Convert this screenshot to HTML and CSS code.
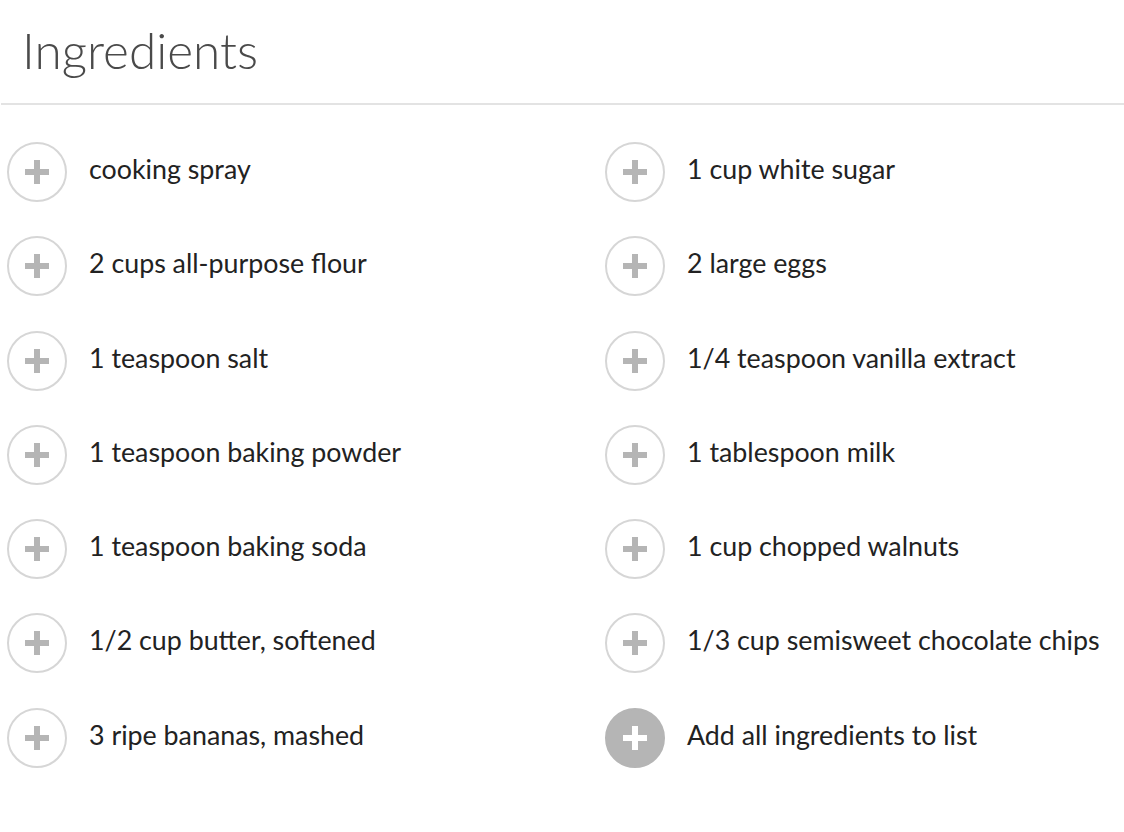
FILE: index.html
```html
<!DOCTYPE html>
<html>
<head>
<meta charset="utf-8">
<link rel="stylesheet" href="styles.css">
</head>
<body>
<div class="page">
  <h1 class="title">Ingredients</h1>
  <div class="rule"></div>
  <div class="grid">
    <div class="col">
      <div class="item"><span class="btn"><svg viewBox="0 0 24 24"><rect x="9" y="0" width="6" height="24"/><rect x="0" y="9" width="24" height="6"/></svg></span><span class="label">cooking spray</span></div>
      <div class="item"><span class="btn"><svg viewBox="0 0 24 24"><rect x="9" y="0" width="6" height="24"/><rect x="0" y="9" width="24" height="6"/></svg></span><span class="label">2 cups all-purpose flour</span></div>
      <div class="item"><span class="btn"><svg viewBox="0 0 24 24"><rect x="9" y="0" width="6" height="24"/><rect x="0" y="9" width="24" height="6"/></svg></span><span class="label">1 teaspoon salt</span></div>
      <div class="item"><span class="btn"><svg viewBox="0 0 24 24"><rect x="9" y="0" width="6" height="24"/><rect x="0" y="9" width="24" height="6"/></svg></span><span class="label">1 teaspoon baking powder</span></div>
      <div class="item"><span class="btn"><svg viewBox="0 0 24 24"><rect x="9" y="0" width="6" height="24"/><rect x="0" y="9" width="24" height="6"/></svg></span><span class="label">1 teaspoon baking soda</span></div>
      <div class="item"><span class="btn"><svg viewBox="0 0 24 24"><rect x="9" y="0" width="6" height="24"/><rect x="0" y="9" width="24" height="6"/></svg></span><span class="label">1/2 cup butter, softened</span></div>
      <div class="item"><span class="btn"><svg viewBox="0 0 24 24"><rect x="9" y="0" width="6" height="24"/><rect x="0" y="9" width="24" height="6"/></svg></span><span class="label">3 ripe bananas, mashed</span></div>
    </div>
    <div class="col">
      <div class="item"><span class="btn"><svg viewBox="0 0 24 24"><rect x="9" y="0" width="6" height="24"/><rect x="0" y="9" width="24" height="6"/></svg></span><span class="label">1 cup white sugar</span></div>
      <div class="item"><span class="btn"><svg viewBox="0 0 24 24"><rect x="9" y="0" width="6" height="24"/><rect x="0" y="9" width="24" height="6"/></svg></span><span class="label">2 large eggs</span></div>
      <div class="item"><span class="btn"><svg viewBox="0 0 24 24"><rect x="9" y="0" width="6" height="24"/><rect x="0" y="9" width="24" height="6"/></svg></span><span class="label">1/4 teaspoon vanilla extract</span></div>
      <div class="item"><span class="btn"><svg viewBox="0 0 24 24"><rect x="9" y="0" width="6" height="24"/><rect x="0" y="9" width="24" height="6"/></svg></span><span class="label">1 tablespoon milk</span></div>
      <div class="item"><span class="btn"><svg viewBox="0 0 24 24"><rect x="9" y="0" width="6" height="24"/><rect x="0" y="9" width="24" height="6"/></svg></span><span class="label">1 cup chopped walnuts</span></div>
      <div class="item"><span class="btn"><svg viewBox="0 0 24 24"><rect x="9" y="0" width="6" height="24"/><rect x="0" y="9" width="24" height="6"/></svg></span><span class="label">1/3 cup semisweet chocolate chips</span></div>
      <div class="item"><span class="btn btn-all"><svg viewBox="0 0 24 24"><rect x="9" y="0" width="6" height="24"/><rect x="0" y="9" width="24" height="6"/></svg></span><span class="label">Add all ingredients to list</span></div>
    </div>
  </div>
</div>
</body>
</html>
```

FILE: styles.css
```css
html, body {
  margin: 0;
  padding: 0;
  background: #fff;
}
.page {
  font-family: "Lato", "Open Sans", sans-serif;
  color: #222;
  width: 1124px;
  height: 832px;
  overflow: hidden;
}
.title {
  margin: 0;
  padding: 20px 0 0 22px;
  height: 82px;
  box-sizing: border-box;
  font-size: 49.5px;
  font-weight: 300;
  color: #4a4a4a;
  line-height: 60px;
}
.rule {
  margin: 21px 0 0 1px;
  height: 2px;
  background: #e3e3e3;
}
.grid {
  display: grid;
  grid-template-columns: 598px 1fr;
  padding: 37px 0 0 7px;
}
.col {
  display: flex;
  flex-direction: column;
  gap: 34.3px;
}
.item {
  display: flex;
  align-items: center;
  height: 60px;
}
.btn {
  flex: 0 0 auto;
  box-sizing: border-box;
  width: 60px;
  height: 60px;
  border-radius: 50%;
  border: 2px solid #d6d6d6;
  display: flex;
  align-items: center;
  justify-content: center;
  margin-right: 22px;
}
.btn svg {
  width: 24px;
  height: 24px;
  fill: #b5b5b5;
}
.btn-all {
  background: #b5b5b5;
  border-color: #b5b5b5;
}
.btn-all svg {
  fill: #fff;
}
.label {
  font-size: 26.8px;
  line-height: 32px;
  position: relative;
  top: -3px;
}
```
